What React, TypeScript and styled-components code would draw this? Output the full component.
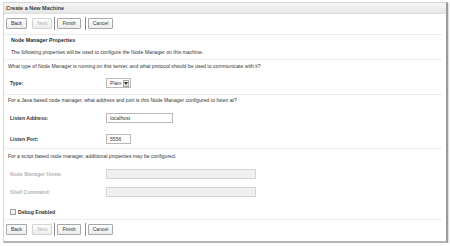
import React from 'react';
import styled, { createGlobalStyle } from 'styled-components';

const GlobalStyle = createGlobalStyle`
  html, body {
    margin: 0;
    padding: 0;
    background: #ffffff;
  }
  body {
    font-family: 'Liberation Sans', Arial, sans-serif;
    color: #333333;
  }
`;

const Panel = styled.div`
  box-sizing: border-box;
  margin: 2px 0 0 3px;
  width: 445px;
  height: 241px;
  border: 1px solid #d6d6d6;
  border-right: 2px solid #9c9c9c;
  border-bottom: 2px solid #b4b4b4;
  box-shadow: 1px 1px 1px rgba(0, 0, 0, 0.12);
  display: flex;
  flex-direction: column;
`;

const Header = styled.div`
  height: 10px;
  line-height: 10px;
  padding-left: 2px;
  font-size: 5.5px;
  font-weight: bold;
  color: #3a3a3a;
  background: linear-gradient(#f6f6f6, #e6e6e6);
  border-bottom: 1px solid #dedede;
`;

const Toolbar = styled.div<{ $top: number; $bottom: number; $line?: boolean }>`
  display: flex;
  align-items: center;
  margin: 0 4px 0 1px;
  padding: ${(p) => p.$top}px 0 ${(p) => p.$bottom}px 1px;
  border-bottom: ${(p) => (p.$line ? '1px solid #ececec' : 'none')};
`;

const Button = styled.button<{ $disabled?: boolean }>`
  box-sizing: border-box;
  height: 11px;
  padding: 0 4px;
  margin: 0;
  font-family: 'Liberation Sans', Arial, sans-serif;
  font-size: 5px;
  line-height: 9px;
  color: ${(p) => (p.$disabled ? '#b0b0b0' : '#333333')};
  background: linear-gradient(#ffffff, #ececec);
  border: 1px solid ${(p) => (p.$disabled ? '#d2d2d2' : '#a8a8a8')};
  border-radius: 1px;
`;

const Gap = styled.span<{ $w: number }>`
  display: inline-block;
  width: ${(p) => p.$w}px;
`;

const Divider = styled.span`
  display: inline-block;
  width: 1px;
  height: 13px;
  margin: 0 2px;
  background: #8e8e8e;
`;

const Section = styled.div<{ $top: number; $bottom: number }>`
  margin: 0 4px 0 1px;
  padding: ${(p) => p.$top}px 0 ${(p) => p.$bottom}px 3px;
  border-bottom: 1px solid #ececec;
  display: flex;
  flex-direction: column;
`;

const Title = styled.div`
  height: 10px;
  line-height: 10px;
  padding-left: 3px;
  font-size: 5.3px;
  font-weight: bold;
  color: #2e2e2e;
`;

const Text = styled.div<{ $indent?: number; $mt?: number }>`
  height: 10px;
  line-height: 10px;
  padding-left: ${(p) => p.$indent ?? 0}px;
  margin-top: ${(p) => p.$mt ?? 0}px;
  font-size: 5.1px;
  color: #333333;
  white-space: nowrap;
`;

const Row = styled.div<{ $mt: number }>`
  display: flex;
  align-items: center;
  height: 12px;
  margin-top: ${(p) => p.$mt}px;
  padding-left: 2px;
`;

const Label = styled.div<{ $disabled?: boolean }>`
  width: 96px;
  font-size: 5.1px;
  font-weight: bold;
  color: ${(p) => (p.$disabled ? '#b4b4b4' : '#333333')};
`;

const Input = styled.div<{ $w: number; $disabled?: boolean }>`
  box-sizing: border-box;
  width: ${(p) => p.$w}px;
  height: 10px;
  line-height: 8px;
  padding-left: 3px;
  font-size: 5.1px;
  color: #333333;
  background: ${(p) => (p.$disabled ? '#f0f0f0' : '#ffffff')};
  border: 1px solid ${(p) => (p.$disabled ? '#d4d4d4' : '#b8b8b8')};
`;

const Select = styled.div`
  box-sizing: border-box;
  display: flex;
  align-items: center;
  gap: 2px;
  width: 25px;
  height: 10px;
  padding: 0 1px 0 3px;
  font-size: 5.1px;
  color: #333333;
  background: #ffffff;
  border: 1px solid #b8b8b8;
`;

const Arrow = styled.span`
  box-sizing: border-box;
  margin-left: auto;
  width: 6px;
  height: 7px;
  display: flex;
  align-items: center;
  justify-content: center;
  background: linear-gradient(#f6f6f6, #dcdcdc);
  border: 1px solid #a4a4a4;
`;

const CheckRow = styled.div<{ $mt: number }>`
  display: flex;
  align-items: center;
  gap: 2px;
  height: 11px;
  margin-top: ${(p) => p.$mt}px;
  padding-left: 2px;
  font-size: 5.1px;
  font-weight: bold;
  color: #333333;
`;

const Box = styled.span`
  box-sizing: border-box;
  width: 6px;
  height: 6px;
  background: linear-gradient(#ffffff, #e8e8e8);
  border: 1px solid #9a9a9a;
`;

function Buttons() {
  return (
    <>
      <Button>Back</Button>
      <Gap $w={5} />
      <Button $disabled>Next</Button>
      <Divider />
      <Button>Finish</Button>
      <Gap $w={2} />
      <Divider />
      <Button>Cancel</Button>
    </>
  );
}

export default function App() {
  return (
    <>
      <GlobalStyle />
      <Panel>
        <Header>Create a New Machine</Header>
        <Toolbar $top={3} $bottom={4} $line>
          <Buttons />
        </Toolbar>

        <Section $top={0} $bottom={2}>
          <Title>Node Manager Properties</Title>
          <Text $indent={3} $mt={2}>
            The following properties will be used to configure the Node Manager on this machine.
          </Text>
        </Section>

        <Section $top={1} $bottom={5}>
          <Text>
            What type of Node Manager is running on this server, and what protocol should be used to communicate with it?
          </Text>
          <Row $mt={6}>
            <Label>Type:</Label>
            <Select>
              <span>Plain</span>
              <Arrow>
                <svg width="4" height="3" viewBox="0 0 4 3">
                  <path d="M0 0 L4 0 L2 3 Z" fill="#333" />
                </svg>
              </Arrow>
            </Select>
          </Row>
        </Section>

        <Section $top={0} $bottom={3}>
          <Text>
            For a Java based node manager, what address and port is this Node Manager configured to listen at?
          </Text>
          <Row $mt={7}>
            <Label>Listen Address:</Label>
            <Input $w={67}>localhost</Input>
          </Row>
          <Row $mt={9}>
            <Label>Listen Port:</Label>
            <Input $w={25}>5556</Input>
          </Row>
        </Section>

        <Section $top={2} $bottom={2}>
          <Text>For a script based node manager, additional properties may be configured.</Text>
          <Row $mt={7}>
            <Label $disabled>Node Manager Home:</Label>
            <Input $w={150} $disabled />
          </Row>
          <Row $mt={6}>
            <Label $disabled>Shell Command:</Label>
            <Input $w={150} $disabled />
          </Row>
          <CheckRow $mt={8}>
            <Box />
            <span>Debug Enabled</span>
          </CheckRow>
        </Section>

        <Toolbar $top={3} $bottom={0}>
          <Buttons />
        </Toolbar>
      </Panel>
    </>
  );
}
